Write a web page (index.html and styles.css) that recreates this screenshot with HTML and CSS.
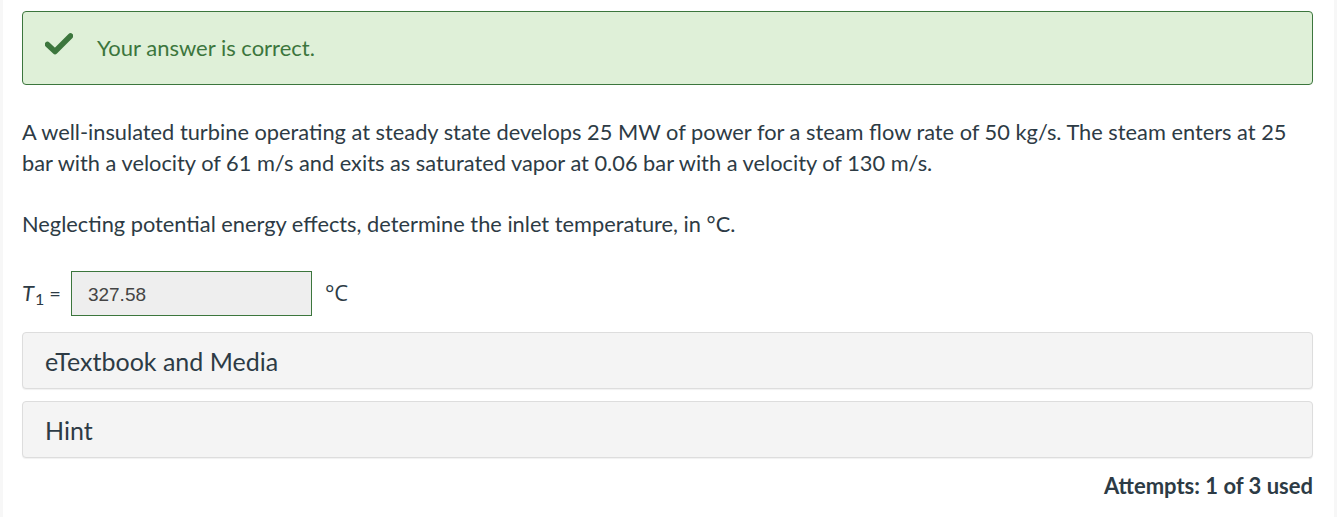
FILE: index.html
```html
<!DOCTYPE html>
<html>
<head>
<meta charset="utf-8">
<link rel="stylesheet" href="styles.css">
</head>
<body>
<div class="page">
  <div class="alert">
    <svg class="check" width="28" height="22" viewBox="0 0 28 22" aria-hidden="true">
      <path d="M2.5 11.5 L10 18.5 L25.5 3" fill="none" stroke="#3c763d" stroke-width="5.5" stroke-linecap="round" stroke-linejoin="round"/>
    </svg>
    <span class="alert-text">Your answer is correct.</span>
  </div>
  <p class="q">A well-insulated turbine operating at steady state develops 25 MW of power for a steam flow rate of 50 kg/s. The steam enters at 25 bar with a velocity of 61 m/s and exits as saturated vapor at 0.06 bar with a velocity of 130 m/s.</p>
  <p class="q">Neglecting potential energy effects, determine the inlet temperature, in °C.</p>
  <div class="answer">
    <span class="var"><i>T</i><sub>1</sub></span><span class="eq">=</span>
    <div class="input">327.58</div>
    <span class="unit">°C</span>
  </div>
  <div class="panel">eTextbook and Media</div>
  <div class="panel">Hint</div>
  <div class="attempts">Attempts: 1 of 3 used</div>
</div>
</body>
</html>
```
FILE: styles.css
```css
html, body {
  margin: 0;
  padding: 0;
  background: #f7f7f7;
}
body {
  font-family: Lato, "Liberation Sans", sans-serif;
  color: #2d3b45;
}
.page {
  margin: 0 3px 0 3px;
  background: #fff;
  padding: 11px 21px 0 19px;
  height: 517px;
  box-sizing: border-box;
}
.alert {
  height: 74px;
  box-sizing: border-box;
  border: 1px solid #3c763d;
  border-radius: 4px;
  background: #dff0d8;
  display: flex;
  align-items: center;
  padding-left: 22px;
}
.check {
  display: block;
  margin-top: -8px;
}
.alert-text {
  margin-left: 24px;
  font-size: 22px;
  color: #3c763d;
  margin-top: -2px;
}
.q {
  font-size: 21.8px;
  line-height: 31px;
  margin: 31px 0 0 0;
  color: #2d3b45;
}
.q + .q {
  margin-top: 30px;
}
.answer {
  display: flex;
  align-items: center;
  margin-top: 32px;
  height: 45px;
}
.var {
  font-size: 22px;
  color: #2d3b45;
}
.var sub {
  font-size: 16px;
  vertical-align: -4px;
  margin-left: 1px;
}
.eq {
  font-size: 20px;
  margin-left: 5px;
  margin-right: 10px;
  position: relative;
  top: -1px;
}
.input {
  width: 241px;
  height: 45px;
  box-sizing: border-box;
  border: 1px solid #3c763d;
  background: #eeeeee;
  font-family: "Liberation Sans", Arial, sans-serif;
  font-size: 19px;
  color: #444;
  padding-left: 16px;
  display: flex;
  align-items: center;
  padding-top: 2px;
}
.unit {
  font-family: "Open Sans", sans-serif;
  font-size: 22px;
  margin-left: 13px;
  margin-top: -4px;
}
.panel {
  margin-top: 16px;
  height: 57px;
  box-sizing: border-box;
  border: 1px solid #ddd;
  border-radius: 4px;
  background: #f4f4f4;
  box-shadow: 0 1px 1px rgba(0,0,0,0.06);
  font-size: 25px;
  color: #2d3b45;
  display: flex;
  align-items: center;
  padding-left: 22px;
}
.panel + .panel {
  margin-top: 12px;
}
.attempts {
  text-align: right;
  font-weight: bold;
  font-size: 22px;
  margin-top: 14px;
  color: #2d3b45;
}
```
